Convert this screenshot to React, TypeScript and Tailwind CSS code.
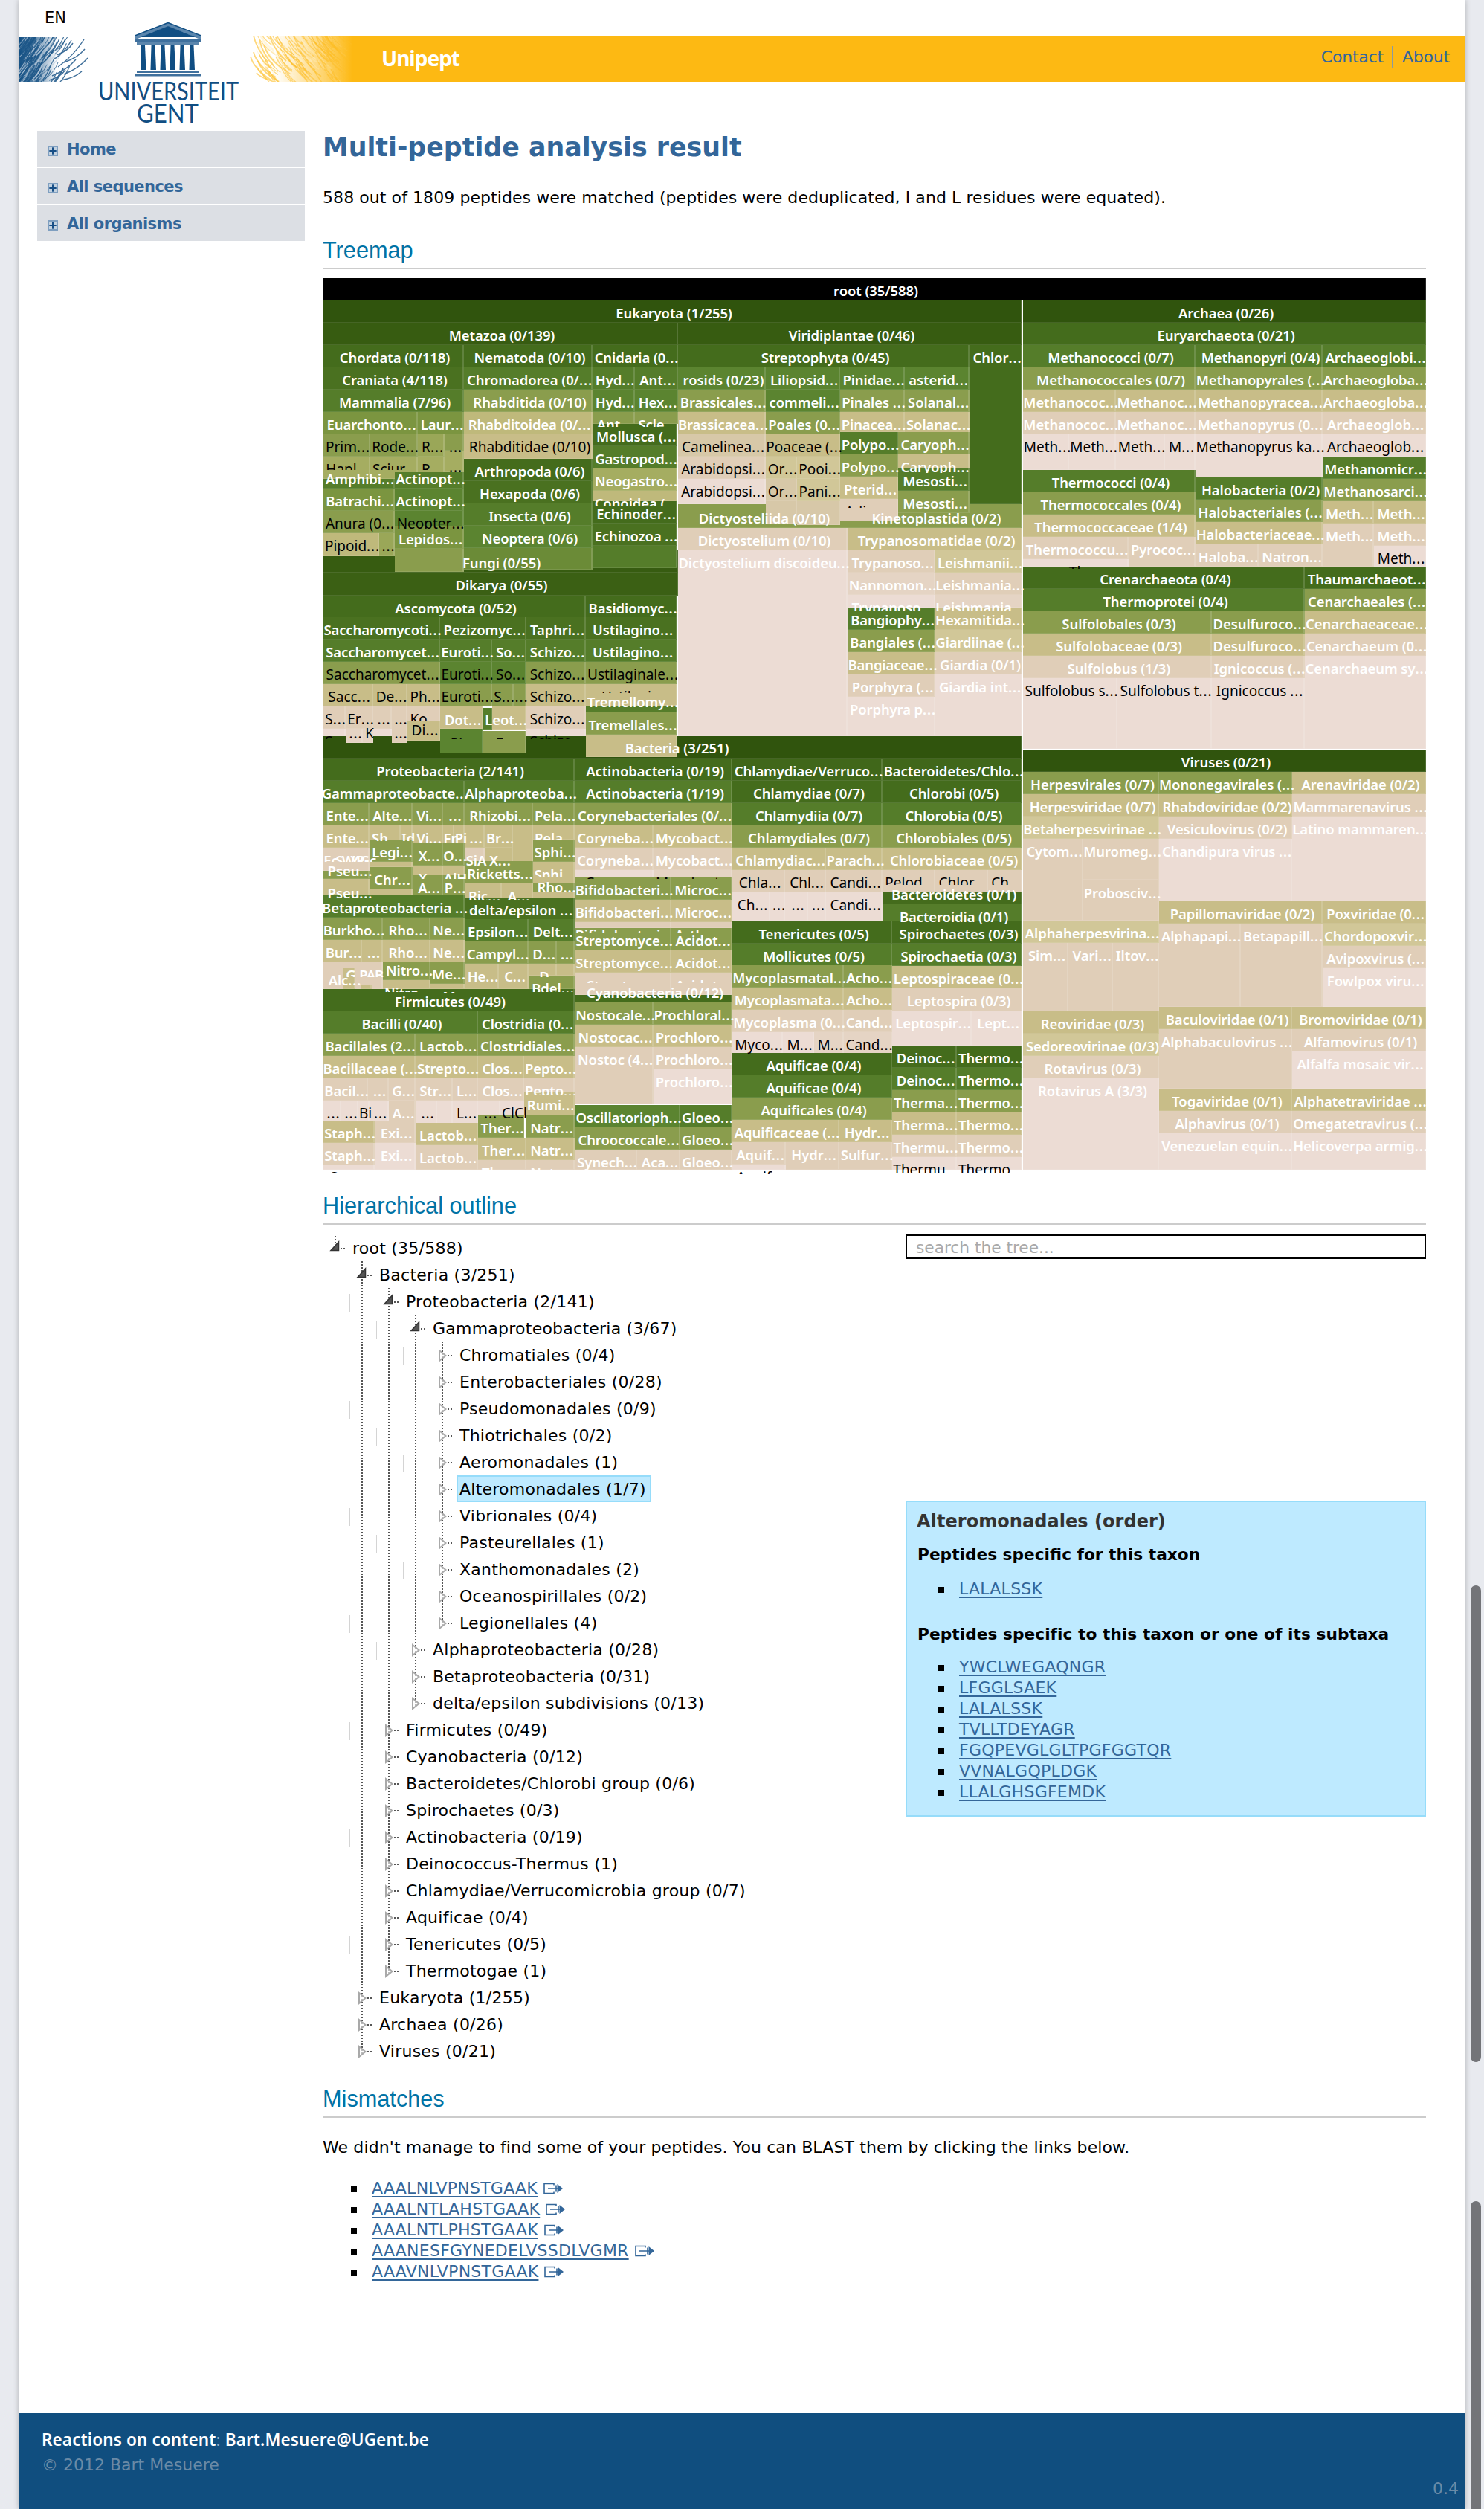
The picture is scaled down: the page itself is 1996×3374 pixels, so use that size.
import React from "react";

/* ------------------------------------------------------------------ */
/* Treemap                                                             */
/* ------------------------------------------------------------------ */

const RANK: Record<string, string> = {
  R: "bg-black",
  K: "bg-[#30540d]",
  k: "bg-[#375c11]",
  y: "bg-[#3b6014]",
  q: "bg-[#40671a]",
  P: "bg-[#446c1c]",
  p: "bg-[#4a7120]",
  C: "bg-[#557d2a]",
  c: "bg-[#5b8430]",
  n: "bg-[#6b8b37]",
  s: "bg-[#7b9540]",
  O: "bg-[#8a9d4d]",
  o: "bg-[#9aa758]",
  i: "bg-[#a5ad61]",
  Z: "bg-[#bfb97b]",
  F: "bg-[#c8bd88]",
  f: "bg-[#d1c798]",
  t: "bg-[#d7c8a8]",
  G: "bg-[#e0ceb8]",
  g: "bg-[#e5d4c4]",
  S: "bg-[#ecdcd4]",
};

const ORIGIN_X = 434;
const ORIGIN_Y = 374;

/*
 * A column: left, right, top, bottom and its rows, split by "|".
 * A row is "<rank>:<label>"; a "!" after the rank gives dark text and
 * "@n" at the end shows only the label's first n pixels.
 * Rows are 30px high, the last one runs to the bottom.
 */
type Column = [number, number, number, number, string];

const COLUMNS: Column[] = [
  [434, 1918, 374, 404, "R:root (35/588)"],
  [434, 1375, 404, 434, "K:Eukaryota (1/255)"],
  [1376, 1918, 404, 464, "K:Archaea (0/26)|P:Euryarchaeota (0/21)"],
  [434, 1375, 990, 1020, "K:"],
  // Metazoa
  [434, 912, 434, 464, "k:Metazoa (0/139)"],
  [434, 912, 740, 801, "k:|y:"],
  [434, 624, 464, 554, "P:Chordata (0/118)|p:Craniata (4/118)|C:Mammalia (7/96)"],
  [434, 562, 554, 584, "s:Euarchonto..."],
  [562, 624, 554, 584, "s:Laur..."],
  [434, 531, 627, 717, "C:|s:|O:"],
  [434, 498, 584, 644, "O!:Prim...|i!:Hapl...@18"],
  [498, 562, 584, 644, "O!:Rode...|i!:Sciur...@18"],
  [562, 598, 584, 644, "o!:R...|i!:R...@18"],
  [531, 624, 635, 657, "C:"],
  [598, 624, 584, 606, "O!:..."],
  [598, 624, 606, 635, "i:"],
  [434, 510, 717, 748, "Z!:Pipoid..."],
  [510, 531, 717, 748, "o!:..."],
  [531, 624, 657, 708, "c:Actinopt...|c!:Neopter...@25"],
  [531, 624, 708, 769, "s:Lepidos...|O:"],
  [624, 797, 464, 617, "P:Nematoda (0/10)|C:Chromadorea (0/...|O:Rhabditida (0/10)|Z:Rhabditoidea (0/...|F!:Rhabditidae (0/10)"],
  [624, 797, 617, 766, "P:Arthropoda (0/6)|p:Hexapoda (0/6)|C:Insecta (0/6)|c:Neoptera (0/6)|n:"],
  [797, 912, 464, 494, "P:Cnidaria (0..."],
  [797, 854, 494, 570, "C:Hyd...|c:Hyd...|O:Ant...@20"],
  [854, 912, 494, 570, "C:Ant...|c:Hex...|O:Scle...@20"],
  [797, 911, 570, 674, "P:Mollusca (...|C:Gastropod...|i:Neogastro...|Z:Conoidea (...@20"],
  [797, 911, 674, 764, "P:Echinoder...|p:Echinozoa ...|C:"],
  // Fungi
  [434, 788, 801, 831, "P:Ascomycota (0/52)"],
  [434, 592, 830, 920, "p:Saccharomycoti...|C:Saccharomycet...|O!:Saccharomycet..."],
  [434, 502, 920, 950, "F!:Sacc..."],
  [502, 548, 920, 950, "F!:De..."],
  [548, 592, 920, 950, "F!:Ph..."],
  [434, 465, 950, 990, "G!:S...|S!:S...@14"],
  [465, 502, 950, 980, "G!:Er..."],
  [502, 527, 950, 990, "G!:...|S:"],
  [527, 548, 950, 999, "G!:..."],
  [548, 592, 950, 970, "G!:Ko...@20"],
  [465, 488, 980, 999, "g:"],
  [488, 502, 980, 999, "g:"],
  [548, 592, 970, 996, "F:"],
  [592, 708, 830, 860, "p:Pezizomyc..."],
  [592, 662, 860, 950, "C:Euroti...|c!:Euroti...|O!:Euroti..."],
  [662, 708, 860, 920, "C:So...|c!:So..."],
  [662, 691, 920, 950, "O!:S..."],
  [691, 708, 920, 950, "O!:..."],
  [592, 650, 950, 1013, "F:|c:"],
  [650, 662, 952, 982, "C:"],
  [662, 708, 950, 982, "F:"],
  [592, 650, 983, 1013, "c!:Pl...@11"],
  [650, 708, 983, 1013, "O!:E...@11"],
  [708, 788, 830, 990, "p:Taphri...|C:Schizo...|O!:Schizo...|F!:Schizo...|G!:Schizo...|S!:Schizo...@14"],
  [788, 911, 801, 831, "P:Basidiomyc..."],
  [788, 911, 830, 950, "p:Ustilagino...|C:Ustilagino...|O!:Ustilaginale...|F!:Ustilagi...@12"],
  [788, 911, 950, 958, "C:"],
  [788, 911, 958, 1018, "O:Tremellales...|F:"],
  // Viridiplantae
  [912, 1375, 434, 464, "k:Viridiplantae (0/46)"],
  [912, 1375, 678, 710, "O:"],
  [912, 1304, 464, 494, "P:Streptophyta (0/45)"],
  [1304, 1375, 464, 678, "P:Chlor..."],
  [912, 1030, 494, 678, "c:rosids (0/23)|O:Brassicales...|F:Brassicacea...|t!:Camelinea...|G!:Arabidopsi...|S!:Arabidopsi..."],
  [1030, 1130, 494, 614, "c:Liliopsid...|c:commeli...|O:Poales (0...|F!:Poaceae (..."],
  [1030, 1072, 614, 704, "f!:Or...|t!:Or...|t:"],
  [1072, 1130, 614, 706, "f!:Pooi...|f!:Pani...|t:"],
  [1130, 1217, 494, 581, "c:Pinidae...|O:Pinales ...|F:Pinacea..."],
  [1217, 1304, 494, 584, "c:asterid...|O:Solanal...|F:Solanac..."],
  [1130, 1208, 581, 701, "C:Polypo...|O:Polypo...|F:Pterid...|G!:Adian...@12"],
  [1208, 1304, 581, 630, "O:Caryoph...|F:Caryoph...@25"],
  [1208, 1304, 630, 690, "C:Mesosti...|O:Mesosti...@24"],
  [912, 1140, 710, 990, "G:Dictyostelium (0/10)|S:Dictyostelium discoideu..."],
  [1140, 1375, 710, 740, "F:Trypanosomatidae (0/2)"],
  [1140, 1258, 740, 817, "G:Trypanoso...|g:Nannomon...|S:Trypanoso...@22"],
  [1258, 1375, 740, 817, "f:Leishmanii...|G:Leishmania...|g:Leishmania...@22"],
  [1140, 1258, 817, 990, "C:Bangiophy...|O:Bangiales (...|F:Bangiaceae...|G:Porphyra (...|S:Porphyra p..."],
  [1258, 1375, 817, 990, "F:Hexamitida...|f:Giardiinae (...|G:Giardia (0/1)|S:Giardia int..."],
  // Archaea
  [1376, 1608, 464, 524, "C:Methanococci (0/7)|O:Methanococcales (0/7)"],
  [1376, 1501, 524, 584, "F:Methanococ...|G:Methanococ..."],
  [1501, 1608, 524, 584, "F:Methanoc...|G:Methanoc..."],
  [1376, 1438, 584, 632, "S!:Meth..."],
  [1438, 1501, 584, 632, "S!:Meth..."],
  [1501, 1567, 584, 632, "S!:Meth..."],
  [1567, 1608, 584, 632, "S!:M..."],
  [1608, 1779, 464, 642, "C:Methanopyri (0/4)|O:Methanopyrales (...|F:Methanopyracea...|G:Methanopyrus (0...|S!:Methanopyrus ka..."],
  [1779, 1918, 464, 614, "C:Archaeoglobi...|O:Archaeogloba...|F:Archaeogloba...|G:Archaeoglob...|S!:Archaeoglob..."],
  [1376, 1608, 632, 722, "C:Thermococci (0/4)|O:Thermococcales (0/4)|F:Thermococcaceae (1/4)"],
  [1376, 1518, 722, 762, "G:Thermococcu...|S!:Th@13"],
  [1518, 1608, 722, 762, "G:Pyrococ..."],
  [1608, 1779, 642, 732, "C:Halobacteria (0/2)|O:Halobacteriales (...|F:Halobacteriaceae..."],
  [1608, 1693, 732, 762, "G:Haloba..."],
  [1693, 1779, 732, 762, "G:Natron..."],
  [1779, 1918, 614, 674, "C:Methanomicr...|O:Methanosarci..."],
  [1779, 1848, 674, 762, "F:Meth...|G:Meth..."],
  [1848, 1918, 674, 762, "F:Meth...|G:Meth...|S!:Meth..."],
  [1376, 1755, 762, 822, "P:Crenarchaeota (0/4)|C:Thermoprotei (0/4)"],
  [1376, 1630, 822, 912, "O:Sulfolobales (0/3)|F:Sulfolobaceae (0/3)|G:Sulfolobus (1/3)"],
  [1376, 1503, 912, 1007, "S!:Sulfolobus s..."],
  [1503, 1630, 912, 1007, "S!:Sulfolobus t..."],
  [1630, 1755, 822, 1007, "O:Desulfuroco...|F:Desulfuroco...|G:Ignicoccus (...|S!:Ignicoccus ..."],
  [1755, 1918, 762, 1007, "P:Thaumarchaeot...|O:Cenarchaeales (...|F:Cenarchaeaceae...|G:Cenarchaeum (0...|S:Cenarchaeum sy..."],
  // Viruses
  [1376, 1918, 1008, 1038, "K:Viruses (0/21)"],
  [1376, 1559, 1038, 1128, "O:Herpesvirales (0/7)|F:Herpesviridae (0/7)|f:Betaherpesvirinae ..."],
  [1376, 1457, 1128, 1238, "G:Cytom..."],
  [1457, 1559, 1128, 1183, "G:Muromeg..."],
  [1457, 1559, 1184, 1238, "G:Probosciv..."],
  [1376, 1559, 1238, 1268, "f:Alphaherpesvirina..."],
  [1376, 1437, 1268, 1360, "G:Sim..."],
  [1437, 1497, 1268, 1360, "G:Vari..."],
  [1497, 1559, 1268, 1360, "G:Iltov..."],
  [1376, 1559, 1360, 1573, "F:Reoviridae (0/3)|f:Sedoreovirinae (0/3)|G:Rotavirus (0/3)|S:Rotavirus A (3/3)"],
  [1559, 1738, 1038, 1212, "O:Mononegavirales (...|F:Rhabdoviridae (0/2)|G:Vesiculovirus (0/2)|S:Chandipura virus ..."],
  [1738, 1918, 1038, 1212, "F:Arenaviridae (0/2)|G:Mammarenavirus ...|S:Latino mammaren..."],
  [1559, 1779, 1212, 1242, "F:Papillomaviridae (0/2)"],
  [1559, 1669, 1242, 1354, "G:Alphapapi..."],
  [1669, 1779, 1242, 1354, "G:Betapapill..."],
  [1779, 1918, 1212, 1354, "F:Poxviridae (0...|f:Chordopoxvir...|G:Avipoxvirus (...|S:Fowlpox viru..."],
  [1559, 1738, 1354, 1464, "F:Baculoviridae (0/1)|G:Alphabaculovirus ..."],
  [1738, 1918, 1354, 1464, "F:Bromoviridae (0/1)|G:Alfamovirus (0/1)|S:Alfalfa mosaic vir..."],
  [1559, 1738, 1464, 1573, "F:Togaviridae (0/1)|G:Alphavirus (0/1)|S:Venezuelan equin..."],
  [1738, 1918, 1464, 1573, "F:Alphatetraviridae ...|G:Omegatetravirus (...|S:Helicoverpa armig..."],
  // Proteobacteria
  [434, 773, 1020, 1050, "P:Proteobacteria (2/141)"],
  [434, 625, 1050, 1080, "C:Gammaproteobacte..."],
  [625, 773, 1050, 1080, "C:Alphaproteoba..."],
  [434, 497, 1080, 1171, "O:Ente...|F:Ente...|G:"],
  [434, 497, 1171, 1182, "O:"],
  [434, 497, 1182, 1204, "F:"],
  [497, 555, 1080, 1110, "O:Alte..."],
  [497, 539, 1110, 1130, "F:Sh...@21"],
  [539, 555, 1110, 1130, "F:Id@21"],
  [555, 596, 1080, 1134, "O:Vi...|F:Vi..."],
  [596, 625, 1080, 1110, "O:..."],
  [596, 611, 1110, 1134, "F:Fr"],
  [611, 625, 1110, 1134, "F:Pi"],
  [497, 555, 1129, 1166, "O:Legi...|F:"],
  [497, 555, 1166, 1204, "O:Chr...|F:"],
  [555, 596, 1134, 1178, "O:X...|F:X...@18"],
  [596, 625, 1134, 1178, "O:O...|F:AlH@18"],
  [555, 596, 1177, 1204, "O:A..."],
  [596, 625, 1177, 1204, "O:P..."],
  [625, 717, 1080, 1110, "O:Rhizobi..."],
  [625, 652, 1110, 1160, "F:...|G:SiA@24"],
  [652, 690, 1110, 1160, "F:Br...|F:X..."],
  [690, 717, 1110, 1160, "F:"],
  [625, 717, 1158, 1188, "O:Ricketts..."],
  [625, 675, 1188, 1208, "F:Ric...@22"],
  [675, 717, 1188, 1208, "F:A...@22"],
  [717, 773, 1080, 1129, "O:Pela...|F:Pela...@20"],
  [717, 773, 1129, 1180, "O:Sphi...|F:Sphi...@21"],
  [717, 773, 1180, 1188, "F:"],
  [717, 773, 1188, 1200, "O:"],
  [717, 773, 1200, 1208, "F:"],
  [434, 625, 1204, 1234, "C:Betaproteobacteria ..."],
  [434, 515, 1234, 1264, "O:Burkho..."],
  [434, 487, 1264, 1294, "F:Bur..."],
  [487, 515, 1264, 1294, "F:..."],
  [434, 515, 1294, 1330, "G:"],
  [462, 478, 1302, 1330, "F:"],
  [486, 500, 1324, 1330, "F:"],
  [515, 579, 1234, 1294, "O:Rho...|F:Rho..."],
  [515, 579, 1294, 1318, "O:"],
  [515, 579, 1318, 1330, "F:Nitro...@16"],
  [579, 625, 1234, 1294, "O:Ne...|F:Ne..."],
  [579, 625, 1293, 1330, "O:Me...|F:M@12"],
  [625, 773, 1207, 1237, "p:delta/epsilon ..."],
  [625, 711, 1236, 1296, "C:Epsilon...|O:Campyl..."],
  [711, 773, 1236, 1266, "C:Delt..."],
  [711, 749, 1266, 1312, "O:D...|F:D@18"],
  [749, 773, 1266, 1312, "O:...|F:"],
  [625, 671, 1296, 1330, "F:He..."],
  [671, 711, 1296, 1330, "F:C..."],
  [711, 773, 1312, 1330, "O:Bdel...@22"],
  // Firmicutes
  [434, 773, 1330, 1360, "P:Firmicutes (0/49)"],
  [434, 643, 1360, 1390, "C:Bacilli (0/40)"],
  [643, 773, 1360, 1420, "C:Clostridia (0...|O:Clostridiales..."],
  [434, 559, 1390, 1450, "O:Bacillales (2...|F:Bacillaceae (..."],
  [559, 643, 1390, 1450, "O:Lactob...|F:Strepto..."],
  [434, 495, 1450, 1480, "G:Bacil..."],
  [495, 523, 1450, 1480, "G:..."],
  [523, 559, 1450, 1510, "G:G...|G:A..."],
  [434, 459, 1480, 1510, "S!:..."],
  [459, 482, 1480, 1510, "S!:..."],
  [482, 497, 1480, 1510, "S!:Bi"],
  [497, 523, 1480, 1510, "S!:..."],
  [559, 609, 1450, 1480, "G:Str..."],
  [609, 643, 1450, 1480, "G:L..."],
  [559, 588, 1480, 1511, "S!:..."],
  [588, 609, 1480, 1511, "S:"],
  [609, 643, 1480, 1511, "S!:L..."],
  [643, 705, 1420, 1480, "F:Clos...|G:Clos..."],
  [643, 673, 1480, 1500, "S!:..."],
  [673, 707, 1480, 1500, "S!:ClCl"],
  [705, 773, 1420, 1469, "F:Pepto...|G:Pepto...@22"],
  [705, 773, 1469, 1500, "F:Rumi..."],
  [434, 504, 1507, 1573, "F:Staph...|G:Staph...|S:"],
  [504, 559, 1507, 1573, "G:Exi...|S:Exi..."],
  [559, 643, 1510, 1573, "F:Lactob...|G:Lactob..."],
  [643, 705, 1500, 1530, "O:Ther..."],
  [643, 708, 1530, 1573, "F:Ther...|G:Ther...@14"],
  [708, 773, 1500, 1573, "O:Natr...|F:Natr...|G:Natr...@14"],
  // Actinobacteria
  [773, 985, 1020, 1110, "P:Actinobacteria (0/19)|C:Actinobacteria (1/19)|O:Corynebacteriales (0/..."],
  [773, 879, 1110, 1180, "F:Coryneba...|G:Coryneba...|S!:Coryne...@12"],
  [879, 985, 1110, 1180, "F:Mycobact...|G:Mycobact...|g!:Mycobact...@12"],
  [773, 903, 1180, 1248, "O:Bifidobacteri...|F:Bifidobacteri...|G:Bifidobacteri...@14"],
  [903, 985, 1180, 1248, "O:Microc...|F:Microc...|G:Arthro...@14"],
  [773, 903, 1248, 1338, "O:Streptomyce...|F:Streptomyce...|G:Streptom...@14"],
  [903, 985, 1248, 1338, "O:Acidot...|F:Acidot...|G:Acidot...@14"],
  [773, 985, 1338, 1348, "P:"],
  [773, 879, 1348, 1485, "O:Nostocale...|F:Nostocac...|G:Nostoc (4..."],
  [879, 985, 1348, 1485, "O:Prochloral...|F:Prochloro...|G:Prochloro...|S:Prochloro..."],
  [773, 915, 1486, 1546, "c:Oscillatorioph...|O:Chroococcale..."],
  [773, 857, 1546, 1573, "G:Synech..."],
  [857, 915, 1546, 1573, "G:Aca..."],
  [915, 985, 1486, 1573, "C:Gloeo...|O:Gloeo...|G:Gloeo..."],
  // Chlamydiae and Bacteroidetes
  [985, 1187, 1020, 1140, "q:Chlamydiae/Verruco...|P:Chlamydiae (0/7)|C:Chlamydiia (0/7)|O:Chlamydiales (0/7)"],
  [985, 1111, 1140, 1170, "F:Chlamydiac..."],
  [1111, 1187, 1140, 1238, "F:Parach...|G!:Candi...|S!:Candi..."],
  [985, 1056, 1170, 1200, "G!:Chla..."],
  [1056, 1111, 1170, 1200, "G!:Chl..."],
  [985, 1036, 1200, 1238, "S!:Ch..."],
  [1036, 1056, 1200, 1238, "S!:..."],
  [1056, 1087, 1200, 1238, "S!:..."],
  [1087, 1111, 1200, 1238, "S!:..."],
  [1187, 1375, 1020, 1170, "q:Bacteroidetes/Chlo...|P:Chlorobi (0/5)|C:Chlorobia (0/5)|O:Chlorobiales (0/5)|F:Chlorobiaceae (0/5)"],
  [1187, 1258, 1170, 1200, "G!:Pelod...@20"],
  [1258, 1329, 1170, 1200, "G!:Chlor...@20"],
  [1329, 1375, 1170, 1200, "G!:Ch...@20"],
  [1187, 1375, 1200, 1216, "P:"],
  [1187, 1375, 1216, 1239, "C:Bacteroidia (0/1)"],
  [985, 1200, 1239, 1299, "P:Tenericutes (0/5)|C:Mollicutes (0/5)"],
  [1200, 1375, 1239, 1388, "P:Spirochaetes (0/3)|C:Spirochaetia (0/3)|F:Leptospiraceae (0...|G:Leptospira (0/3)"],
  [985, 1135, 1298, 1388, "O:Mycoplasmatal...|F:Mycoplasmata...|G:Mycoplasma (0..."],
  [1135, 1200, 1298, 1417, "O:Acho...|F:Acho...|G:Cand...|g!:Cand..."],
  [985, 1053, 1388, 1417, "S!:Myco..."],
  [1053, 1095, 1388, 1417, "S!:M..."],
  [1095, 1135, 1388, 1417, "g!:M..."],
  [1200, 1307, 1359, 1406, "S:Leptospir..."],
  [1307, 1375, 1359, 1406, "S:Lept..."],
  [985, 1200, 1416, 1506, "P:Aquificae (0/4)|C:Aquificae (0/4)|O:Aquificales (0/4)"],
  [985, 1129, 1506, 1536, "F:Aquificaceae (..."],
  [985, 1057, 1536, 1573, "G:Aquif...|S!:Aquif...@13"],
  [1057, 1129, 1536, 1573, "G:Hydr..."],
  [1129, 1200, 1506, 1573, "F:Hydr...|G:Sulfur..."],
  [1200, 1287, 1406, 1573, "P:Deinoc...|C:Deinoc...|O:Therma...|F:Therma...|G:Thermu...|S!:Thermu...@22"],
  [1287, 1375, 1406, 1573, "P:Thermo...|C:Thermo...|O:Thermo...|F:Thermo...|G:Thermo...|S!:Thermo...@22"],
];

/* Labels whose box is covered by a neighbour: left, right, top, text. */
const LABELS: [number, number, number, string][] = [
  [434, 531, 627, "Amphibi..."],
  [434, 531, 657, "Batrachi..."],
  [434, 531, 687, "!Anura (0..."],
  [531, 624, 627, "Actinopt..."],
  [598, 624, 611, "!..."],
  [434, 911, 740, "Fungi (0/55)"],
  [434, 911, 770, "Dikarya (0/55)"],
  [465, 488, 969, "!..."],
  [488, 502, 969, "!K"],
  [527, 548, 969, "!..."],
  [548, 592, 965, "!Di..."],
  [592, 650, 951, "Dot..."],
  [650, 708, 951, "Leot..."],
  [788, 911, 927, "Tremellomy..."],
  [434, 1383, 989, "Bacteria (3/251)"],
  [912, 1140, 680, "Dictyosteliida (0/10)"],
  [1140, 1375, 680, "Kinetoplastida (0/2)"],
  [436, 450, 1140, "Ec@19"],
  [449, 460, 1140, "S@19"],
  [459, 474, 1140, "W@19"],
  [470, 480, 1140, "Y@19"],
  [478, 488, 1140, "P@19"],
  [486, 500, 1140, "Gc@19"],
  [434, 504, 1154, "Pseu..."],
  [434, 504, 1184, "Pseu...@24"],
  [717, 777, 1176, "Rho..."],
  [434, 490, 1301, "Alc..."],
  [462, 478, 1294, "G@20"],
  [480, 494, 1294, "P@20"],
  [491, 503, 1294, "A@20"],
  [502, 514, 1294, "B@20"],
  [515, 583, 1288, "Nitro..."],
  [773, 985, 1318, "Cyanobacteria (0/12)"],
  [1187, 1375, 1186, "Bacteroidetes (0/1)"],
  [434, 460, 1566, "!S@12"],
];

function Label({ left, right, top, text }: { left: number; right: number; top: number; text: string }) {
  const dark = text.startsWith("!");
  const [label, clip] = text.replace(/^!/, "").split("@");
  return (
    <div
      className={
        "absolute flex justify-center overflow-x-visible overflow-y-clip whitespace-nowrap pl-1 leading-[30px] " +
        (dark
          ? "text-[19px] font-normal text-black"
          : "text-[18.5px] font-semibold tracking-[-0.1px] text-white")
      }
      style={{
        left: left - ORIGIN_X,
        top: top - ORIGIN_Y + 2,
        width: right - left,
        height: clip ? Number(clip) - 2 : 30,
      }}
    >
      <span>
        {label.replace("...", "")}
        {label.includes("...") && <span className="tracking-[0.9px]">...</span>}
      </span>
    </div>
  );
}

function Treemap() {
  const boxes: React.ReactNode[] = [];
  const labels: React.ReactNode[] = [];
  COLUMNS.forEach(([left, right, top, bottom, rows], c) => {
    const parts = rows.split("|");
    parts.forEach((row, r) => {
      const [head, ...rest] = row.split(":");
      const text = rest.join(":");
      const y = top + r * 30;
      const end = r === parts.length - 1 ? bottom : y + 30;
      boxes.push(
        <div
          key={c + "-" + r}
          className={"absolute border-b border-r-2 border-b-white/10 border-r-white/15 " + RANK[head[0]]}
          style={{ left: left - ORIGIN_X, top: y - ORIGIN_Y, width: right - left, height: end - y }}
        />,
      );
      if (text) {
        labels.push(
          <Label key={c + "-" + r} left={left} right={right} top={y} text={(head[1] || "") + text} />,
        );
      }
    });
  });
  return (
    <div className="relative mt-3 h-[1199px] w-[1484px] font-['Noto_Sans',sans-serif]">
      {boxes}
      {labels}
      {LABELS.map(([l, r, t, text], i) => (
        <Label key={i} left={l} right={r} top={t} text={text} />
      ))}
    </div>
  );
}

/* ------------------------------------------------------------------ */
/* Hierarchical outline                                                */
/* ------------------------------------------------------------------ */

const TREE: [number, string][] = [
  [0, "root (35/588)"],
  [1, "Bacteria (3/251)"],
  [2, "Proteobacteria (2/141)"],
  [3, "Gammaproteobacteria (3/67)"],
  [4, "Chromatiales (0/4)"],
  [4, "Enterobacteriales (0/28)"],
  [4, "Pseudomonadales (0/9)"],
  [4, "Thiotrichales (0/2)"],
  [4, "Aeromonadales (1)"],
  [4, "Alteromonadales (1/7)"],
  [4, "Vibrionales (0/4)"],
  [4, "Pasteurellales (1)"],
  [4, "Xanthomonadales (2)"],
  [4, "Oceanospirillales (0/2)"],
  [4, "Legionellales (4)"],
  [3, "Alphaproteobacteria (0/28)"],
  [3, "Betaproteobacteria (0/31)"],
  [3, "delta/epsilon subdivisions (0/13)"],
  [2, "Firmicutes (0/49)"],
  [2, "Cyanobacteria (0/12)"],
  [2, "Bacteroidetes/Chlorobi group (0/6)"],
  [2, "Spirochaetes (0/3)"],
  [2, "Actinobacteria (0/19)"],
  [2, "Deinococcus-Thermus (1)"],
  [2, "Chlamydiae/Verrucomicrobia group (0/7)"],
  [2, "Aquificae (0/4)"],
  [2, "Tenericutes (0/5)"],
  [2, "Thermotogae (1)"],
  [1, "Eukaryota (1/255)"],
  [1, "Archaea (0/26)"],
  [1, "Viruses (0/21)"],
];

const VLINE = { stroke: "#555", strokeWidth: 2, strokeDasharray: "2 2" };

function continues(index: number, depth: number) {
  for (let i = index + 1; i < TREE.length; i++) {
    if (TREE[i][0] < depth) return false;
    if (TREE[i][0] === depth) return true;
  }
  return false;
}

function Guide({ index, column, depth }: { index: number; column: number; depth: number }) {
  const open = index < 4;
  const last = !continues(index, column);
  const tick = column >= 1 && column <= depth - 1 && (index - column - 1) % 4 === 0;
  return (
    <svg className="h-9 w-9 shrink-0 overflow-visible" viewBox="0 0 36 36">
      {column < depth && !last && <line x1="18" y1="0" x2="18" y2="36" {...VLINE} />}
      {tick && <line x1="1.5" y1="8" x2="1.5" y2="32" stroke="#d4d4d4" strokeWidth="1" />}
      {column === depth && (
        <>
          <line x1="18" y1={index === 0 ? 2 : 0} x2="18" y2={last ? 22 : 36} {...VLINE} />
          <line x1="25" y1="19" x2="32" y2="19" {...VLINE} />
          {open ? (
            <path d="M12 21.5 L22.5 21.5 L22.5 10 Z" fill="#555" stroke="#333" strokeWidth="1.5" />
          ) : (
            <path d="M14 12 L14 26 L22.5 19 Z" fill="#fff" fillOpacity="0.6" stroke="#a9a9a9" strokeWidth="2" />
          )}
        </>
      )}
    </svg>
  );
}

function Outline() {
  return (
    <div className="-ml-px flex flex-col">
      {TREE.map(([depth, name], index) => (
        <div key={name} className="flex h-9">
          {Array.from({ length: depth + 1 }, (_, column) => (
            <Guide key={column} index={index} column={column} depth={depth} />
          ))}
          <span
            className={
              "ml-px h-9 whitespace-nowrap border-2 pl-[2px] pr-[5px] text-[22px] leading-[33px] tracking-[0.24px] " +
              (index === 9 ? "border-[#96dcfa] bg-[#beeaff]" : "border-transparent")
            }
          >
            {name}
          </span>
        </div>
      ))}
    </div>
  );
}

/* ------------------------------------------------------------------ */
/* Peptide lists                                                       */
/* ------------------------------------------------------------------ */

function ExternalIcon() {
  return (
    <svg className="ml-2 h-4 w-[27px]" viewBox="0 0 27 16" fill="none" stroke="#336699" strokeWidth="1.600">
      <path d="M14 3.500V1.500H1V14.500H14V12.500" />
      <path d="M6 8H20M17 3.500V12.500" />
      <path d="M18.500 2L26 8L18.500 14Z" fill="#336699" stroke="none" />
    </svg>
  );
}

function Peptides({ items, external }: { items: string[]; external?: boolean }) {
  return (
    <ul>
      {items.map((name) => (
        <li key={name} className="flex h-7 items-center">
          <span className="mr-5 mt-px size-2 bg-black" />
          <a className="text-[22px] leading-7 tracking-[0.25px] text-[#336699] underline decoration-2 underline-offset-[3px]">
            {name}
          </a>
          {external && <ExternalIcon />}
        </li>
      ))}
    </ul>
  );
}

function TaxonPanel() {
  return (
    <div className="mt-[325px] h-[425px] border-2 border-[#96dcfa] bg-[#beeaff] pl-[13px]">
      <h3 className="mt-[9px] text-[24px] font-bold leading-[34px] tracking-[0.05px] text-[#333]">Alteromonadales (order)</h3>
      <h4 className="mt-[14px] pl-px text-[21.700px] font-bold leading-7">Peptides specific for this taxon</h4>
      <div className="mt-[18px] pl-[29px]">
        <Peptides items={["LALALSSK"]} />
      </div>
      <h4 className="mt-[33px] pl-px text-[21.700px] font-bold leading-7 tracking-[0.04px]">
        Peptides specific to this taxon or one of its subtaxa
      </h4>
      <div className="mt-4 pl-[29px]">
        <Peptides
          items={[
            "YWCLWEGAQNGR",
            "LFGGLSAEK",
            "LALALSSK",
            "TVLLTDEYAGR",
            "FGQPEVGLGLTPGFGGTQR",
            "VVNALGQPLDGK",
            "LLALGHSGFEMDK",
          ]}
        />
      </div>
    </div>
  );
}

/* ------------------------------------------------------------------ */
/* Header                                                              */
/* ------------------------------------------------------------------ */

function noise(i: number) {
  const v = Math.sin(i * 127.1 + 11.7) * 43758.5453;
  return v - Math.floor(v);
}

function BlueScribble() {
  return (
    <svg className="h-[60px] w-[94px]" viewBox="0 0 94 60" fill="none">
      <defs>
        <linearGradient id="ink" x1="0" x2="1">
          <stop offset="0" stopColor="#104e83" />
          <stop offset="0.35" stopColor="#104e83" stopOpacity="0.7" />
          <stop offset="0.9" stopColor="#104e83" stopOpacity="0" />
        </linearGradient>
      </defs>
      <path d="M0 0H56L46 60H0Z" fill="url(#ink)" />
      {Array.from({ length: 120 }, (_, i) => {
        const x = -10 + noise(i) * (0.35 + 0.65 * noise(i + 200)) * 66;
        const y = 10 + noise(i + 100) * 58;
        const len = 12 + noise(i + 50) * 20;
        return (
          <path
            key={i}
            d={`M${x} ${y} q${len * 0.45} ${-len * 0.35} ${len * 0.7} ${-len}`}
            stroke={i % 4 === 3 ? "#b9cbdc" : "#1d5788"}
            strokeOpacity={i % 4 === 3 ? 0.7 : 0.85}
            strokeWidth={0.9 + noise(i + 9) * 0.8}
          />
        );
      })}
      {[
        [60, 50, 92, 28], [56, 58, 84, 46], [52, 40, 87, 3], [60, 34, 88, 16], [46, 30, 70, 4],
        [44, 52, 76, 30], [40, 58, 62, 44], [34, 26, 54, 2], [50, 24, 72, 8],
      ].map(([a, b, c, d], i) => (
        <path
          key={i}
          d={`M${a} ${b}Q${(a + c) / 2 + 4} ${(b + d) / 2 + 3} ${c} ${d}`}
          stroke="#3f6f9a"
          strokeWidth="1.400"
        />
      ))}
    </svg>
  );
}

function YellowScribble() {
  return (
    <svg className="h-[62px] w-[160px]" viewBox="0 0 160 62" fill="none">
      <defs>
        <linearGradient id="fade" x1="0" x2="1">
          <stop offset="0.1" stopColor="#fdb913" stopOpacity="0" />
          <stop offset="0.45" stopColor="#fdb913" stopOpacity="0.45" />
          <stop offset="0.85" stopColor="#fdb913" />
        </linearGradient>
      </defs>
      <path d="M34 0H160V62H30L20 40Z" fill="url(#fade)" />
      {Array.from({ length: 130 }, (_, i) => {
        const x = 6 + noise(i + 400) * 112;
        const y = -14 + noise(i + 77) * 62;
        const len = 14 + noise(i + 33) * 18;
        const light = i % 3 === 0;
        return (
          <path
            key={i}
            d={`M${x} ${y} q${len * 0.25} ${len * 0.6} ${len * 0.85} ${len}`}
            stroke={light ? "#fff3d0" : "#fdbd24"}
            strokeOpacity={light ? 0.75 * (1 - x / 125) : 0.55}
            strokeWidth={1 + noise(i + 5) * 0.8}
          />
        );
      })}
      {[
        [6, 0, 26, 36], [2, 28, 30, 60], [10, 50, 34, 62], [6, 22, 36, 56], [28, 0, 50, 34],
        [36, 2, 62, 30], [20, 12, 44, 44], [12, 34, 40, 62], [14, 6, 34, 42],
      ].map(([a, b, c, d], i) => (
        <path
          key={i}
          d={`M${a} ${b}Q${a + 4} ${(b + d) / 2} ${c} ${d}`}
          stroke="#fdc744"
          strokeOpacity="0.7"
          strokeWidth="1.800"
        />
      ))}
    </svg>
  );
}

function Logo() {
  return (
    <svg
      className="h-[140px] w-[200px] font-['Lato',sans-serif]"
      viewBox="126 28 200 140"
      fill="#104e83"
    >
      <path d="M226 30.500L271 48.500V52H267L226 35.500L185 52H181V48.500Z" fill="#5b86ad" />
      <path d="M226 30.500L270.500 48" stroke="#104e83" strokeWidth="1.500" fill="none" />
      <path d="M226 30.500L181.500 48" stroke="#104e83" strokeWidth="1.500" fill="none" />
      <path d="M226 35L263 50H189Z" />
      <rect x="181" y="52" width="90" height="4" fill="#3f709d" />
      <rect x="184" y="57" width="84" height="3.500" fill="#5b86ad" />
      {[189, 202.5, 215.5, 228.500, 241.500, 254.500].map((x) => (
        <path key={x} d={`M${x + 1} 61H${x + 6}L${x + 7.500} 94H${x}Z`} />
      ))}
      <rect x="184" y="95" width="84" height="3" fill="#3f709d" />
      <rect x="181" y="99.500" width="90" height="3" fill="#3f709d" />
      <text x="132" y="134.500" fontSize="35" textLength="189" lengthAdjust="spacingAndGlyphs">
        UNIVERSITEIT
      </text>
      <text x="184" y="165" fontSize="35" textLength="83" lengthAdjust="spacingAndGlyphs">
        GENT
      </text>
    </svg>
  );
}

function Header() {
  return (
    <header className="h-[176px]">
      <div className="h-12 pl-[34px] pt-[9px] text-[21px] leading-[30px]">EN</div>
      <div className="flex h-[62px]">
        <div className="flex w-[309px] items-end">
          <BlueScribble />
          <div className="relative h-[62px] w-[200px]">
            <div className="absolute -top-5 left-[6px]">
              <Logo />
            </div>
          </div>
        </div>
        <YellowScribble />
        <div className="-ml-px flex flex-1 items-start justify-between bg-[#fdb913] pl-[19px] pr-5">
          <span className="mt-[11px] font-['Noto_Sans',sans-serif] text-[28px] font-bold leading-[38px] tracking-[-1px] text-white">
            Unipept
          </span>
          <nav className="mt-[15px] flex text-[22px] leading-7 tracking-[-0.2px] text-[#336699]">
            <a className="pr-[11px]">Contact</a>
            <span className="-mt-px w-0.5 bg-[#8a9aa0]" />
            <a className="pl-3">About</a>
          </nav>
        </div>
      </div>
    </header>
  );
}

function MenuItem({ label }: { label: string }) {
  return (
    <a className="flex h-12 items-center bg-[#dcdfe4] pl-[14px] text-[21px] font-bold tracking-[-0.55px] text-[#336699]">
      <svg className="mr-3 mt-[5px] size-[14px]" viewBox="0 0 14 14">
        <rect width="14" height="14" fill="#7f9fc0" />
        <path d="M2 2H6V6H2ZM8 2H12V6H8ZM2 8H6V12H2ZM8 8H12V12H8Z" fill="#c3d2e0" />
        <path d="M7 2.500V11.500M2.500 7H11.500" stroke="#174e86" strokeWidth="2" />
      </svg>
      <span className="mt-[3px]">{label}</span>
    </a>
  );
}

function SectionTitle({ children }: { children: React.ReactNode }) {
  return (
    <h2 className="h-[46px] border-b-2 border-[#ccc] font-['Liberation_Sans',Arial,sans-serif] text-[30.700px] leading-[41px] text-[#0073a6]">
      {children}
    </h2>
  );
}

export default function App() {
  return (
    <div className="relative h-[3374px] w-[1996px] overflow-hidden bg-[#e8eaef] font-['DejaVu_Sans',Verdana,sans-serif] text-black">
      <div className="ml-[26px] flex h-full w-[1944px] flex-col bg-white shadow-[0_0_8px_rgba(0,0,0,0.3)]">
        <Header />
        <div className="flex h-[3069px] pl-6">
          <nav className="flex w-[360px] flex-col gap-0.5">
            <MenuItem label="Home" />
            <MenuItem label="All sequences" />
            <MenuItem label="All organisms" />
          </nav>
          <main className="ml-6 w-[1484px]">
            <h1 className="text-[34.800px] font-bold leading-[44px] text-[#336699]">Multi-peptide analysis result</h1>
            <p className="mb-9 mt-8 whitespace-nowrap text-[22px] leading-7 tracking-[0.075px]">
              588 out of 1809 peptides were matched (peptides were deduplicated, I and L residues were equated).
            </p>
            <SectionTitle>Treemap</SectionTitle>
            <Treemap />
            <div className="h-7" />
            <SectionTitle>Hierarchical outline</SectionTitle>
            <div className="mt-[13px] flex justify-between">
              <Outline />
              <div className="w-[700px]">
                <div className="h-[33px] border-2 border-black pl-3 text-[21.700px] leading-[31px] text-[#a9a9a9]">
                  search the tree...
                </div>
                <TaxonPanel />
              </div>
            </div>
            <div className="h-[26px]" />
            <SectionTitle>Mismatches</SectionTitle>
            <p className="mb-[27px] mt-[26px] whitespace-nowrap text-[22px] leading-7 tracking-[0.12px]">
              We didn&apos;t manage to find some of your peptides. You can BLAST them by clicking the links below.
            </p>
            <div className="pl-[38px]">
              <Peptides
                external
                items={[
                  "AAALNLVPNSTGAAK",
                  "AAALNTLAHSTGAAK",
                  "AAALNTLPHSTGAAK",
                  "AAANESFGYNEDELVSSDLVGMR",
                  "AAAVNLVPNSTGAAK",
                ]}
              />
            </div>
          </main>
        </div>
        <footer className="flex flex-1 justify-between bg-[#104e7f] pl-[30px] pr-[8px] pt-[21px]">
          <div>
            <p className="font-['Noto_Sans',sans-serif] text-[22.500px] font-semibold leading-[30px] tracking-[0.12px] text-white">
              Reactions on content<span className="font-normal text-[#8fa9c0]">:</span> Bart.Mesuere@UGent.be
            </p>
            <p className="mt-[5px] text-[22px] leading-7 text-[#6a8aa6]">© 2012 Bart Mesuere</p>
          </div>
          <span className="mt-[67px] text-[22px] leading-7 text-[#6a8aa6]">0.4</span>
        </footer>
      </div>
      <div className="absolute left-[1978px] top-[2132px] h-[641px] w-[14px] rounded-full bg-[#737478]" />
      <div className="absolute left-[1978px] top-[2960px] h-[430px] w-[14px] rounded-full bg-[#737478]" />
    </div>
  );
}
